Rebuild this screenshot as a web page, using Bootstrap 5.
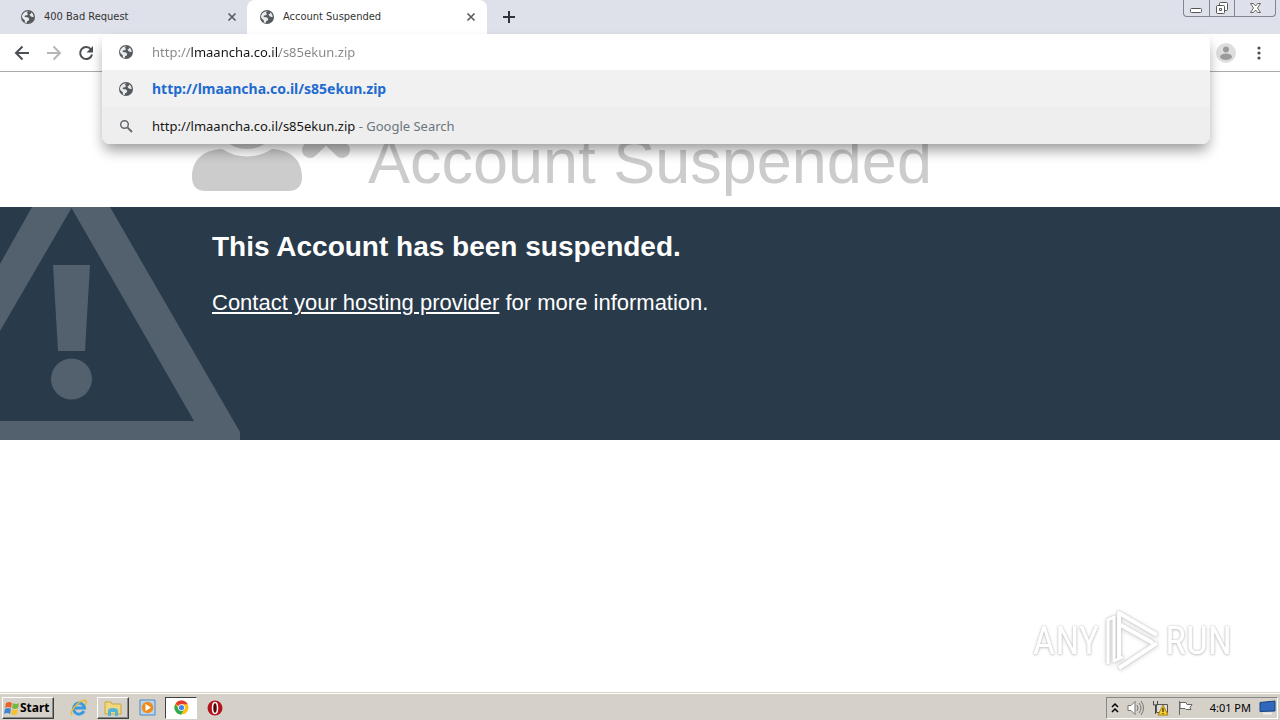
<!DOCTYPE html>
<html lang="en">
<head>
<meta charset="utf-8">
<meta name="viewport" content="width=device-width, initial-scale=1">
<title>Account Suspended</title>
<link href="https://cdn.jsdelivr.net/npm/bootstrap@5.3.0/dist/css/bootstrap.min.css" rel="stylesheet">
<style>
  body { font-family: "Noto Sans", "DejaVu Sans", sans-serif; font-size: 11px; line-height: 16px; color: #333; background: #fff; }
  svg { display: block; flex: none; }
  button { padding: 0; border: 0; background: none; color: #5a5d61; }
  .tabstrip { background: #dee1e9; height: 34px; padding-left: 7px; font-family: "DejaVu Sans Condensed", "Noto Sans", sans-serif; }
  .browser-tab { width: 240px; padding: 0 10px 0 13px; }
  .browser-tab.current { background: #fff; border-radius: 8px 8px 0 0; padding: 0 11px 0 12px; }
  .win-controls { border: 1px solid #7f8591; border-top: 0; border-radius: 0 0 4px 4px; height: 17px; margin-right: 4px; }
  .win-controls button { width: 25px; }
  .win-controls button + button { border-left: 1px solid #7f8591; }
  .win-controls button:last-child { width: 41px; }
  .toolbar { height: 38px; border-bottom: 1px solid #aaa; padding: 0 14px; }
  .omnibox { left: 102px; right: 70px; top: 0; z-index: 5; background: #fff; border-radius: 8px; box-shadow: 0 8px 14px -2px rgba(0,0,0,.4); font-size: 13px; line-height: 20px; }
  .omni-row { height: 37px; padding: 0 16px; gap: 18px; }
  .omni-row.entry { height: 36px; }
  .omni-row a { color: #161616; text-decoration: none; }
  .omni-row a.best { color: #1f6bd0; font-weight: 700; font-size: 14px; }
  .omni-list { background: #eee; border-radius: 0 0 8px 8px; overflow: hidden; }
  .omni-list .omni-row:first-child { background: #f1f1f1; }
  .address { border: 0; outline: 0; padding: 0; height: 24px; color: transparent; background: linear-gradient(90deg, #858585 39px, #161616 39px 127px, #858585 127px); -webkit-background-clip: text; background-clip: text; }
  .page { font-family: "Liberation Sans", Arial, sans-serif; }
  .site-head { padding: 0 15%; height: 135px; gap: 18px; color: #ccc; }
  .site-head h1 { font-size: 63px; line-height: 72px; margin: 53px 0 0; font-weight: 400; }
  .notice { background: #293a4a; color: #fff; min-height: 233px; padding: 23px 20px 20px 212px; font-size: 22px; line-height: 28px; }
  .notice h2 { font-size: 28px; line-height: 34px; font-weight: 700; margin: 0 0 25px; }
  .notice a { color: #fff; text-underline-offset: 2px; }
  .watermark { right: 48px; bottom: 48px; gap: 4px; color: #fff; font: 39px/60px "Roboto Condensed", Roboto, sans-serif; text-shadow: 0 0 2px #bbb, 0 1px 3px #ccc; }
  .watermark svg { filter: drop-shadow(0 0 1px #bbb) drop-shadow(0 1px 2px #ddd); }
  .taskbar { background: #d5d0c8; height: 28px; border-top: 1px solid #d5d0c8; box-shadow: inset 0 1px #fff; padding: 3px 2px 1px; color: #000; }
  .raised { background: #d5d0c8; border: 1px solid; border-color: #fff #404040 #404040 #fff; box-shadow: inset -1px -1px #888; height: 22px; }
  .start-btn { width: 52px; font-weight: 700; font-size: 12px; color: #000; padding: 0 1px; }
  .tasks { gap: 2px; margin-left: 9px; }
  .task { width: 32px; height: 22px; }
  .sunken { background: #fff; border: 1px solid; border-color: #404040 #fff #fff #404040; }
  .tray { border: 1px solid; border-color: #888 #fff #fff #888; height: 22px; padding: 0 1px 0 4px; }
</style>
</head>
<body class="d-flex flex-column min-vh-100">
<svg width="0" height="0" class="position-absolute" aria-hidden="true">
  <symbol id="globe" viewBox="0 0 16 16"><circle cx="8" cy="8" r="7" fill="#56595d"/><path d="M8.500 2.200 6.800 3.800l1.200 1.300-1 1.200-2 .3-.4 1.400 2.800.2 1.800 1.300-.4 2-1.800.7-.2 1.800-2.100-.5.200-2-1.900-1.800L1.900 8C2 5 4.800 2 8.500 2.200z" fill="#e8eaed"/><path d="m10.800 3.200 1.800 1.200 1.300 3.300-1.700.4-1.600-.8-1.200-1.800 1.700-.8z" fill="#e8eaed"/></symbol>
  <symbol id="cross" viewBox="0 0 10 10"><path d="m1.500 1.500 7 7m0-7-7 7" stroke="#5a5d61" stroke-width="1.700"/></symbol>
</svg>

<header>
  <div class="tabstrip d-flex" role="tablist">
    <div class="browser-tab d-flex align-items-center" role="tab">
      <svg width="16" height="16" class="me-2"><use href="#globe"/></svg><span class="flex-grow-1">400 Bad Request</span>
      <button aria-label="Close tab"><svg width="10" height="10"><use href="#cross"/></svg></button>
    </div>
    <div class="browser-tab current d-flex align-items-center" role="tab" aria-selected="true">
      <svg width="16" height="16" class="me-2"><use href="#globe"/></svg><span class="flex-grow-1">Account Suspended</span>
      <button aria-label="Close tab"><svg width="10" height="10"><use href="#cross"/></svg></button>
    </div>
    <button class="ms-3" aria-label="New tab"><svg width="12" height="12"><path d="M6 0v12M0 6h12" stroke="#303338" stroke-width="2"/></svg></button>
    <div class="win-controls d-flex ms-auto">
      <button aria-label="Minimize"><svg width="24" height="16"><rect x="6.500" y="8.500" width="11" height="4" rx="1" fill="#fff" stroke="#555"/></svg></button>
      <button aria-label="Restore"><svg width="24" height="16" fill="#fff" stroke="#555"><rect x="9.500" y="2.500" width="8" height="8" rx="1"/><rect x="6.500" y="5.500" width="8" height="8" rx="1"/><path d="M9.500 8.500h2v2h-2z"/></svg></button>
      <button aria-label="Close window"><svg width="40" height="16"><path d="M15.500 3.500h3l2 2.500 2-2.500h3l-3 4.500 3 4.500h-3l-2-2.500-2 2.500h-3l3-4.500z" fill="#fff" stroke="#666"/></svg></button>
    </div>
  </div>

  <div class="toolbar position-relative d-flex align-items-center">
    <nav class="d-flex gap-3" aria-label="Page controls">
      <button aria-label="Back"><svg width="16" height="16" fill="none" stroke="#4c4f53" stroke-width="2"><path d="M15 8H2m6.500-6.500L2 8l6.500 6.500"/></svg></button>
      <button aria-label="Forward"><svg width="16" height="16" fill="none" stroke="#b5b6b8" stroke-width="2"><path d="M1 8h13M7.500 1.500 14 8l-6.500 6.500"/></svg></button>
      <button aria-label="Reload"><svg width="16" height="16"><path d="M13 4.500A6 6 0 1 0 14 9.500" fill="none" stroke="#4c4f53" stroke-width="2"/><path d="M15 1v6.500H8.500z" fill="#4c4f53"/></svg></button>
    </nav>
    <div class="ms-auto d-flex align-items-center gap-3">
      <button aria-label="Profile"><svg width="20" height="20"><circle cx="10" cy="10" r="10" fill="#dedede"/><circle cx="10" cy="6.500" r="3" fill="#9b9b9b"/><ellipse cx="10" cy="13.700" rx="6" ry="3.200" fill="#9b9b9b"/></svg></button>
      <button aria-label="Menu"><svg width="14" height="14" fill="#4c4f53"><circle cx="7" cy="2" r="1.600"/><circle cx="7" cy="7" r="1.600"/><circle cx="7" cy="12" r="1.600"/></svg></button>
    </div>
    <div class="omnibox position-absolute">
      <div class="omni-row entry d-flex align-items-center">
        <svg width="16" height="16"><use href="#globe"/></svg>
        <input class="address flex-grow-1" type="text" aria-label="Address" value="http://lmaancha.co.il/s85ekun.zip">
      </div>
      <div class="omni-list">
        <div class="omni-row d-flex align-items-center"><svg width="16" height="16"><use href="#globe"/></svg><a class="best" href="#">http://lmaancha.co.il/s85ekun.zip</a></div>
        <div class="omni-row d-flex align-items-center"><svg width="16" height="16" fill="none" stroke="#66696d"><circle cx="6.500" cy="6.500" r="3.800" stroke-width="1.500"/><path d="m9.500 9.500 4.500 4.500" stroke-width="1.800"/></svg><a href="#">http://lmaancha.co.il/s85ekun.zip <span class="text-secondary">- Google Search</span></a></div>
      </div>
    </div>
  </div>
</header>

<main class="page flex-grow-1">
  <div class="site-head d-flex">
    <svg width="158" height="120" viewBox="0 0 158 120" fill="#ccc"><circle cx="55" cy="43" r="34"/><path d="M30 77C12 78 0 87 0 105q0 14 14 14h82q14 0 14-14c0-18-12-27-30-28-16 10-34 10-50 0z"/><path d="m118 47 32 31m0-31-32 31" stroke="#ccc" stroke-width="16" stroke-linecap="round"/></svg>
    <h1>Account Suspended</h1>
  </div>
  <section class="notice position-relative">
    <svg class="position-absolute top-0 start-0" width="240" height="233" fill="#53616e"><path fill-rule="evenodd" d="M-29-29 32 0 0 57v67L71.500 1 194 214H0v19h240v-8L110 0H32z"/><path d="M53 58h37l-5 86H58z"/><circle cx="71.500" cy="172" r="20.500"/></svg>
    <h2>This Account has been suspended.</h2>
    <p class="mb-0"><a href="#">Contact your hosting provider</a> for more information.</p>
  </section>
</main>

<div class="watermark position-fixed d-flex align-items-center" aria-label="ANY RUN">
  <span>ANY</span>
  <svg width="58" height="62" fill="none" stroke="#fff" stroke-width="4" stroke-linejoin="round"><path d="M16 49V3l38 22M16 14l34 19M16 58l38-25"/><path d="M5 54V10l6-3v44l9-4" stroke-width="3"/></svg>
  <span>RUN</span>
</div>

<footer class="taskbar d-flex align-items-center">
  <button class="raised start-btn d-flex align-items-center"><svg width="16" height="16"><path d="M2 3q3-2 6 0L7 8Q4 6 1 8z" fill="#e8622c"/><path d="M9 3q3 2 6 0l-1 5q-3 2-6 0z" fill="#76b83f"/><path d="M1 9q3-2 6 0l-1 5q-3-2-6 0z" fill="#3d86d6"/><path d="M8 9q3 2 6 0l-1 5q-3 2-6 0z" fill="#f4c22e"/></svg>Start</button>
  <div class="tasks d-flex align-items-center">
    <button class="task d-flex align-items-center justify-content-center" aria-label="Internet Explorer"><svg width="18" height="18" fill="none"><path d="M14 12A5.500 5.500 0 1 1 14.500 9H4" stroke="#3a9be0" stroke-width="3"/><path d="M2 16C-2 12 13-2 16 2q1 1-1 4" stroke="#edb92e" stroke-width="1.500"/></svg></button>
    <button class="task raised d-flex align-items-center justify-content-center" aria-label="Explorer"><svg width="18" height="18"><path d="M1 3h6l1 2h9v10H1z" fill="#f0d77c" stroke="#c7a845"/><path d="M4 17v-5q0-3 5-3t5 3v5h-3v-4H7v4z" fill="#54b4dc"/></svg></button>
    <button class="task d-flex align-items-center justify-content-center" aria-label="Media Player"><svg width="17" height="17"><path d="M1 1h15v15H1z" fill="#b4d6f2" stroke="#4f88bd"/><circle cx="8.500" cy="8.500" r="5.800" fill="#f28a1c"/><path d="m6.500 5 5.500 3.500L6.500 12z" fill="#fff"/></svg></button>
    <button class="task sunken d-flex align-items-center justify-content-center" aria-label="Chrome"><svg width="15" height="15" viewBox="0 0 16 16"><circle cx="8" cy="8" r="7.500" fill="#fbc116"/><path d="M8 8 1.500 4.200A7.500 7.500 0 0 1 14.500 4.500H8z" fill="#e33b2e"/><path d="M1.500 4.200A7.500 7.500 0 0 0 7.500 15.500L11 9.500 5 10z" fill="#2da94f"/><circle cx="8" cy="8" r="3.600" fill="#fff"/><circle cx="8" cy="8" r="2.800" fill="#4285f4"/></svg></button>
    <button class="task d-flex align-items-center justify-content-center" aria-label="Opera"><svg width="16" height="16"><circle cx="8" cy="8" r="7.500" fill="#b3141b"/><ellipse cx="8" cy="8" rx="2.500" ry="5.500" fill="#5f0509" stroke="#fff" stroke-width="1.500"/></svg></button>
  </div>
  <div class="tray d-flex align-items-center ms-auto gap-2">
    <svg width="8" height="12" fill="none" stroke="#000" stroke-width="1.500"><path d="m1 5 3-3 3 3M1 10l3-3 3 3"/></svg>
    <svg width="17" height="16" fill="none" stroke="#777"><path d="M1 5.500h3l4-4v13l-4-4H1z" fill="#fff"/><path d="M10 5q2 3 0 6M12 3q4 5 0 10M14 1q5 7 0 14"/></svg>
    <svg width="17" height="16"><path d="M4.500 4.500h11v8h-11z" fill="#ddd" stroke="#555"/><path d="M1.500 1v4h4V1M3.500 5v9" fill="none" stroke="#444"/><path d="m11 5 5 10H6z" fill="#f9cf2e" stroke="#a8830b"/><path d="M11 8v4m0 1v1" stroke="#000"/></svg>
    <svg width="17" height="16"><path d="M2.500 1v14M3 2.500h6l1 2h5l-2 3 1 2H9l-1-1H3z" fill="#fff" stroke="#666"/></svg>
    <time class="ms-2">4:01 PM</time>
    <svg width="17" height="15"><path d="M1 2.500 16 1v10L1 11.500z" fill="#2f68bd" stroke="#16437f"/><path d="M4 13.500h9" stroke="#eee" stroke-width="2"/></svg>
  </div>
</footer>
<script src="https://cdn.jsdelivr.net/npm/bootstrap@5.3.0/dist/js/bootstrap.bundle.min.js"></script>
</body>
</html>
